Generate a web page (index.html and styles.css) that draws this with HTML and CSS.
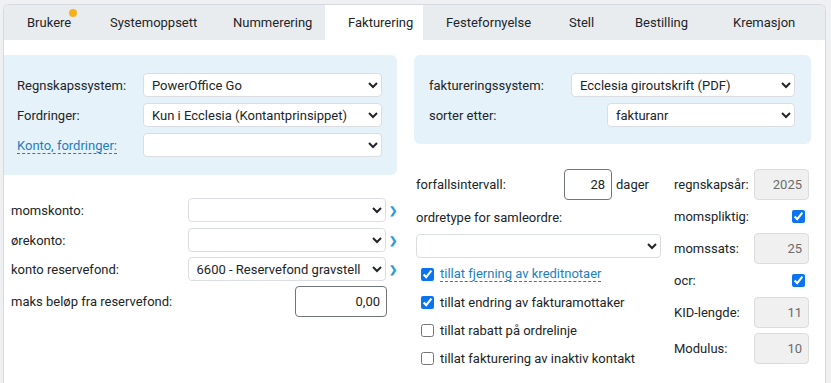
FILE: index.html
```html
<!DOCTYPE html>
<html>

<head>
    <meta charset="UTF-8">
    <title>Fakturering</title>
    <link rel="stylesheet" href="styles.css">
</head>

<body>
    <div class="page">
        <div class="card">
            <!-- faner -->
            <div class="tabs">
                <div class="tab">Brukere<span class="dot"></span></div>
                <div class="tab">Systemoppsett</div>
                <div class="tab">Nummerering</div>
                <div class="tab active">Fakturering</div>
                <div class="tab">Festefornyelse</div>
                <div class="tab">Stell</div>
                <div class="tab">Bestilling</div>
                <div class="tab">Kremasjon</div>
            </div>
            <div class="content">
                <div class="col col_l">
                    <div class="panel panel_l">
                        <div class="row">
                            <span class="lbl lbl_sys">Regnskapssystem:</span>
                            <select class="sel sel_sys"><option>PowerOffice Go</option></select>
                        </div>
                        <div class="row">
                            <span class="lbl lbl_sys">Fordringer:</span>
                            <select class="sel sel_sys"><option>Kun i Ecclesia (Kontantprinsippet)</option></select>
                        </div>
                        <div class="row">
                            <span class="lbl lbl_sys"><span class="link">Konto, fordringer:</span></span>
                            <select class="sel sel_sys"><option></option></select>
                        </div>
                    </div>
                    <div class="accounts">
                        <div class="row">
                            <span class="lbl lbl_acc">momskonto:</span>
                            <select class="sel sel_acc"><option></option></select>
                            <span class="go">&#x276F;</span>
                        </div>
                        <div class="row">
                            <span class="lbl lbl_acc">ørekonto:</span>
                            <select class="sel sel_acc"><option></option></select>
                            <span class="go">&#x276F;</span>
                        </div>
                        <div class="row">
                            <span class="lbl lbl_acc">konto reservefond:</span>
                            <select class="sel sel_acc"><option>6600 - Reservefond gravstell</option></select>
                            <span class="go">&#x276F;</span>
                        </div>
                        <div class="row row_tall">
                            <span class="lbl lbl_max">maks beløp fra reservefond:</span>
                            <input class="num num_max" type="text" value="0,00">
                        </div>
                    </div>
                </div>
                <div class="col col_r">
                    <div class="panel panel_r">
                        <div class="row spread">
                            <span class="lbl">faktureringssystem:</span>
                            <select class="sel sel_inv"><option>Ecclesia giroutskrift (PDF)</option></select>
                        </div>
                        <div class="row spread">
                            <span class="lbl">sorter etter:</span>
                            <select class="sel sel_sort"><option>fakturanr</option></select>
                        </div>
                    </div>
                    <div class="lower">
                        <div class="mid">
                            <div class="row row_tall">
                                <span class="lbl lbl_due">forfallsintervall:</span>
                                <input class="num num_due" type="text" value="28">
                                <span class="unit">dager</span>
                            </div>
                            <div class="row row_text">ordretype for samleordre:</div>
                            <select class="sel sel_type"><option></option></select>
                            <div class="checks">
                                <label class="check"><input type="checkbox" checked><span class="link">tillat fjerning av kreditnotaer</span></label>
                                <label class="check"><input type="checkbox" checked><span>tillat endring av fakturamottaker</span></label>
                                <label class="check"><input type="checkbox"><span>tillat rabatt på ordrelinje</span></label>
                                <label class="check"><input type="checkbox"><span>tillat fakturering av inaktiv kontakt</span></label>
                            </div>
                        </div>
                        <div class="side">
                            <div class="srow">
                                <span>regnskapsår:</span>
                                <input class="num num_off" type="text" value="2025" disabled>
                            </div>
                            <div class="srow srow_chk">
                                <span>momspliktig:</span>
                                <input type="checkbox" checked>
                            </div>
                            <div class="srow">
                                <span>momssats:</span>
                                <input class="num num_off" type="text" value="25" disabled>
                            </div>
                            <div class="srow srow_chk">
                                <span>ocr:</span>
                                <input type="checkbox" checked>
                            </div>
                            <div class="srow">
                                <span>KID-lengde:</span>
                                <input class="num num_off" type="text" value="11" disabled>
                            </div>
                            <div class="srow srow_last">
                                <span>Modulus:</span>
                                <input class="num num_off" type="text" value="10" disabled>
                            </div>
                        </div>
                    </div>
                </div>
            </div>
        </div>
    </div>
</body>

</html>
```

FILE: styles.css
```css
* {
    margin: 0;
    padding: 0;
    box-sizing: border-box;
}
:root {
    --text: #212529;
    --line: #d6dade;
    --blue: #1d7fc1;
    --panel: #e6f2f9;
}
body {
    background-color: #eef0f2;
    font-family: Roboto, "Liberation Sans", sans-serif;
    font-size: 13px;
    color: var(--text);
}
/* 外框：左边 3px，顶部 4px */
.page {
    padding: 4px 5px 0 3px;
    height: 100vh;
}
.card {
    height: 100%;
    border: 1px solid var(--line);
    border-bottom: none;
    border-radius: 6px 6px 0 0;
    background-color: #fff;
    overflow: hidden;
}
/* 标签栏 */
.tabs {
    display: grid;
    grid-template-columns: 83px 123px 115px 98px 123px 66px 98px 1fr;
    height: 35px;
    background-color: #e9ecef;
}
.tab {
    position: relative;
    padding-left: 23px;
    line-height: 35px;
    white-space: nowrap;
}
.tab.active {
    background-color: #fff;
}
.dot {
    position: absolute;
    left: 65px;
    top: 4px;
    width: 8px;
    height: 8px;
    border-radius: 50%;
    background-color: #f5b21c;
}
/* 内容 */
.content {
    display: flex;
    padding-top: 15px;
}
.col_l {
    width: 393px;
}
.col_r {
    width: 397px;
    margin-left: 17px;
}
.panel {
    display: flex;
    flex-direction: column;
    gap: 6px;
    background-color: var(--panel);
    padding: 18px 16px 18px 13px;
}
.panel_l {
    height: 120px;
    border-radius: 0 6px 6px 0;
    padding-right: 15px;
}
.panel_r {
    height: 89px;
    border-radius: 6px;
    padding-left: 15px;
}
.row {
    display: flex;
    align-items: center;
    height: 24px;
}
.spread {
    justify-content: space-between;
}
.row_tall {
    height: 31px;
}
.lbl_sys {
    width: 126px;
}
.link {
    color: var(--blue);
    border-bottom: 1px dashed var(--blue);
}
.sel {
    height: 24px;
    border: 1px solid #dadde1;
    border-radius: 4px;
    background-color: #fff;
    font-family: inherit;
    font-size: 13px;
    color: var(--text);
    padding: 0 4px;
}
.sel_sys {
    width: 239px;
}
.sel_inv {
    width: 224px;
}
.sel_sort {
    width: 188px;
}
.sel_acc {
    width: 199px;
}
.sel_type {
    display: block;
    width: 245px;
}
/* 账户部分 */
.accounts {
    display: flex;
    flex-direction: column;
    gap: 6px;
    padding: 23px 0 0 7px;
}
.accounts .row:nth-child(3) {
    margin-top: -1px;
}
.accounts .row_tall {
    margin-top: -1px;
}
.lbl_acc {
    width: 177px;
}
.lbl_max {
    width: 284px;
}
.go {
    margin-left: 3px;
    color: #2a9bd8;
    font-size: 10px;
    font-weight: bold;
}
.num {
    height: 31px;
    border: 1px solid #70757a;
    border-radius: 4px;
    font-family: inherit;
    font-size: 13px;
    color: var(--text);
    text-align: right;
    padding: 0 6px;
    background-color: #fff;
}
.num_max {
    width: 92px;
}
.lbl_due {
    width: 148px;
}
.num_due {
    width: 48px;
}
.unit {
    margin-left: 4px;
}
.num_off {
    width: 55px;
    border-color: #dcdcdc;
    background-color: #f0f0f0;
    color: #6c6c6c;
}
/* 右下部分 */
.lower {
    display: flex;
    padding: 25px 0 0 2px;
}
.mid {
    width: 245px;
}
.row_text {
    height: 34px;
}
.checks {
    display: flex;
    flex-direction: column;
    padding-top: 2px;
}
.check {
    display: flex;
    align-items: center;
    height: 28px;
    gap: 6px;
    padding-left: 5px;
}
input[type="checkbox"] {
    width: 13px;
    height: 13px;
    margin: 0;
    accent-color: #0a74f0;
}
.side {
    display: flex;
    flex-direction: column;
    width: 135px;
    margin-left: 13px;
}
.srow {
    display: flex;
    align-items: center;
    justify-content: space-between;
    height: 31px;
}
.srow_chk {
    height: 33px;
    padding-right: 4px;
}
.srow_last {
    margin-top: 5px;
}
```
